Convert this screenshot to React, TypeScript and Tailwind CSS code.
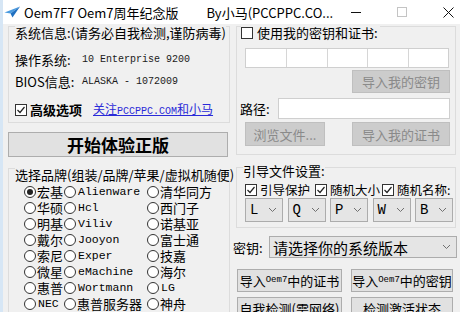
import React from 'react';

const mono = "font-['Liberation_Mono','Noto_Sans_CJK_SC',monospace]";

const Check = ({ checked = false }: { checked?: boolean }) => (
    <span className="w-[12px] h-[12px] shrink-0 border border-[#333] bg-white flex items-center justify-center">
        {checked && (
            <svg width="10" height="10" viewBox="0 0 10 10">
                <path d="M1.5 5 L4 7.5 L8.5 2" fill="none" stroke="#222" strokeWidth="1.2" />
            </svg>
        )}
    </span>
);

const Radio = ({ checked = false }: { checked?: boolean }) => (
    <span className="w-[12px] h-[12px] shrink-0 rounded-full border border-[#333] bg-white flex items-center justify-center">
        {checked && <span className="w-[6px] h-[6px] rounded-full bg-[#222]" />}
    </span>
);

const Chevron = () => (
    <svg width="9" height="6" viewBox="0 0 9 6" className="shrink-0">
        <path d="M1 1 L4.5 4.5 L8 1" fill="none" stroke="#707070" strokeWidth="1" />
    </svg>
);

const brands: [string, boolean][][] = [
    [['宏基', false], ['Alienware', true], ['清华同方', false]],
    [['华硕', false], ['Hcl', true], ['西门子', false]],
    [['明基', false], ['Viliv', true], ['诺基亚', false]],
    [['戴尔', false], ['Jooyon', true], ['富士通', false]],
    [['索尼', false], ['Exper', true], ['技嘉', false]],
    [['微星', false], ['eMachine', true], ['海尔', false]],
    [['惠普', false], ['Wortmann', true], ['LG', true]],
    [['NEC', true], ['惠普服务器', false], ['神舟', false]],
    [['苹果', false], ['VMware', true], ['三星', false]],
];

const BrandLabel = ({ text, latin }: { text: string; latin: boolean }) =>
    latin ? (
        <span className={`${mono} text-[11.5px] leading-[16px] ml-[2px]`}>{text}</span>
    ) : (
        <span className="text-[13px] leading-[16px] ml-[1px]">{text}</span>
    );

export default function App() {
    return (
        <div className="w-[460px] h-[312px] overflow-hidden bg-[#f0f0f0] border-l-[3px] border-[#d6e6f5] text-black font-['Noto_Sans_CJK_SC','Noto_Sans',sans-serif] flex flex-col">
            {/* title bar */}
            <div className="h-[24px] shrink-0 bg-white flex items-center whitespace-nowrap">
                <svg width="16" height="12" viewBox="0 0 16 12" className="ml-[1px] shrink-0">
                    <path d="M16 0.5 L0.5 6.5 L6.5 7.5 Z" fill="#4a9be0" />
                    <path d="M6.5 7.5 L8.5 11.5 L16 0.5 Z" fill="#1f6fc0" />
                </svg>
                <span className="ml-[4px] text-[13px] leading-none shrink-0">Oem7F7 Oem7周年纪念版</span>
                <span className="ml-[28px] text-[13px] leading-none shrink-0">By小马(PCCPPC.CO...</span>
                <div className="ml-auto flex h-full shrink-0">
                    <div className="w-[46px] flex items-center justify-center">
                        <svg width="10" height="10" viewBox="0 0 10 10">
                            <path d="M0 5.5 H10" stroke="#111" strokeWidth="1" />
                        </svg>
                    </div>
                    <div className="w-[46px] flex items-center justify-center">
                        <svg width="10" height="10" viewBox="0 0 10 10">
                            <rect x="0.5" y="0.5" width="9" height="9" fill="none" stroke="#c4c4c4" strokeWidth="1" />
                        </svg>
                    </div>
                    <div className="w-[46px] flex items-center justify-center">
                        <svg width="11" height="11" viewBox="0 0 11 11">
                            <path d="M0.5 0.5 L10.5 10.5 M10.5 0.5 L0.5 10.5" stroke="#111" strokeWidth="1" />
                        </svg>
                    </div>
                </div>
            </div>

            <div className="flex pt-[2px] grow min-h-0">
                {/* left column */}
                <div className="ml-[5px] w-[222px] flex flex-col">
                    <div className="h-[97px] shrink-0 border border-[#dcdcdc] px-[6px] flex flex-col">
                        <div className="-mt-[2px] h-[16px] leading-[16px] text-[13px] bg-[#f0f0f0] w-fit whitespace-nowrap">
                            系统信息:(请务必自我检测,谨防病毒)
                        </div>
                        <div className="mt-[10px] h-[18px] flex items-center leading-[18px]">
                            <span className="w-[67px] text-[13px]">操作系统:</span>
                            <span className={`${mono} text-[10px] text-[#1a1a1a]`}>10 Enterprise 9200</span>
                        </div>
                        <div className="mt-[4px] h-[18px] flex items-center leading-[18px]">
                            <span className="w-[67px] text-[13px]">BIOS信息:</span>
                            <span className={`${mono} text-[10px] text-[#1a1a1a]`}>ALASKA - 1072009</span>
                        </div>
                        <div className="mt-[10px] h-[18px] flex items-center leading-[18px]">
                            <Check checked />
                            <span className="ml-[3px] w-[63px] text-[13px] font-bold">高级选项</span>
                            <span className="text-[12px] text-[#2a2ad8] underline whitespace-nowrap">
                                关注<span className={`${mono} text-[10px]`}>PCCPPC.COM</span>和小马
                            </span>
                        </div>
                    </div>

                    <div className="mt-[9px] h-[25px] shrink-0 w-[220px] bg-[#e1e1e1] border border-[#adadad] flex items-center justify-center text-[17px] leading-none font-bold">
                        开始体验正版
                    </div>

                    <div className="mt-[11px] grow border border-b-0 border-[#dcdcdc] flex flex-col">
                        <div className="-mt-[2px] ml-[6px] h-[15px] leading-[15px] text-[13px] bg-[#f0f0f0] w-fit whitespace-nowrap">
                            选择品牌(组装/品牌/苹果/虚拟机随便)
                        </div>
                        <div className="pl-[15px] pt-[2px] flex flex-col">
                            {brands.map((row, i) => (
                                <div key={i} className="h-[16px] shrink-0 grid grid-cols-[40px_83px_1fr] items-center leading-[16px]">
                                    {row.map(([t, latin], j) => (
                                        <div key={j} className="h-[16px] flex items-center whitespace-nowrap">
                                            <Radio checked={i === 0 && j === 0} />
                                            <BrandLabel text={t} latin={latin} />
                                        </div>
                                    ))}
                                </div>
                            ))}
                        </div>
                    </div>
                </div>

                {/* right column */}
                <div className="ml-[3px] w-[224px] flex flex-col">
                    <div className="ml-[3px] w-[220px] h-[129px] shrink-0 border border-[#dcdcdc] flex flex-col">
                        <div className="-mt-[2px] ml-[4px] h-[16px] flex items-center gap-[4px] bg-[#f0f0f0] w-fit pr-[2px]">
                            <Check />
                            <span className="text-[13px] leading-[16px]">使用我的密钥和证书:</span>
                        </div>
                        <div className="mt-[7px] ml-[8px] w-[204px] h-[20px] grid grid-cols-5 border border-[#cfcfcf] bg-white">
                            <div />
                            <div className="border-l border-[#d6d6d6]" />
                            <div className="border-l border-[#d6d6d6]" />
                            <div className="border-l border-[#d6d6d6]" />
                            <div className="border-l border-[#d6d6d6]" />
                        </div>
                        <div className="mt-[2px] self-end mr-[5px] w-[98px] h-[23px] bg-[#cccccc] border border-[#bfbfbf] text-[#8a8a8a] text-[13px] leading-none flex items-center justify-center">
                            导入我的密钥
                        </div>
                        <div className="mt-[5px] h-[21px] flex items-center">
                            <span className="ml-[3px] text-[13px] leading-none">路径:</span>
                            <div className="ml-auto mr-[5px] w-[172px] h-[21px] bg-white border border-[#cfcfcf]" />
                        </div>
                        <div className="mt-[3px] h-[24px] flex">
                            <div className="ml-[8px] w-[80px] bg-[#cccccc] border border-[#bfbfbf] text-[#8a8a8a] text-[13px] leading-none flex items-center justify-center">
                                浏览文件...
                            </div>
                            <div className="ml-auto mr-[5px] w-[98px] bg-[#cccccc] border border-[#bfbfbf] text-[#8a8a8a] text-[13px] leading-none flex items-center justify-center">
                                导入我的证书
                            </div>
                        </div>
                    </div>

                    <div className="mt-[12px] ml-[3px] w-[220px] h-[61px] shrink-0 border border-[#dcdcdc] flex flex-col">
                        <div className="-mt-[5px] ml-[6px] h-[16px] leading-[16px] text-[13px] bg-[#f0f0f0] w-fit">
                            引导文件设置:
                        </div>
                        <div className="mt-[3px] ml-[8px] h-[16px] flex items-center text-[12.5px] leading-[16px] whitespace-nowrap">
                            <div className="w-[70px] flex items-center gap-[3px]">
                                <Check checked />
                                <span>引导保护</span>
                            </div>
                            <div className="w-[67px] flex items-center gap-[3px]">
                                <Check checked />
                                <span>随机大小</span>
                            </div>
                            <div className="flex items-center gap-[3px]">
                                <Check checked />
                                <span>随机名称:</span>
                            </div>
                        </div>
                        <div className="ml-[8px] h-[24px] flex gap-[4.5px]">
                            {['L', 'Q', 'P', 'W', 'B'].map((l) => (
                                <div key={l} className="w-[38px] bg-[#e5e5e5] border border-[#acacac] flex items-center justify-between pl-[4px] pr-[5px]">
                                    <span className={`${mono} text-[14px] leading-none`}>{l}</span>
                                    <Chevron />
                                </div>
                            ))}
                        </div>
                    </div>

                    <div className="mt-[8px] h-[22px] shrink-0 flex items-center">
                        <span className="w-[36px] text-[13px] leading-none">密钥:</span>
                        <div className="w-[188px] h-[22px] bg-[#e5e5e5] border border-[#acacac] flex items-center justify-between pl-[3px] pr-[5px]">
                            <span className="text-[15px] leading-none">请选择你的系统版本</span>
                            <Chevron />
                        </div>
                    </div>

                    <div className="mt-[11px] h-[23px] shrink-0 flex">
                        <div className="ml-[4px] w-[105px] bg-[#e1e1e1] border border-[#adadad] text-[13px] leading-none flex items-center justify-center whitespace-nowrap">
                            导入<span className={`${mono} text-[9px]`}>Oem7</span>中的证书
                        </div>
                        <div className="ml-[9px] w-[102px] bg-[#e1e1e1] border border-[#adadad] text-[13px] leading-none flex items-center justify-center whitespace-nowrap">
                            导入<span className={`${mono} text-[9px]`}>Oem7</span>中的密钥
                        </div>
                    </div>
                    <div className="mt-[5px] h-[23px] shrink-0 flex">
                        <div className="ml-[4px] w-[105px] bg-[#e1e1e1] border border-[#adadad] text-[13px] leading-none flex items-center justify-center whitespace-nowrap">
                            自我检测(需网络)
                        </div>
                        <div className="ml-[9px] w-[102px] bg-[#e1e1e1] border border-[#adadad] text-[13px] leading-none flex items-center justify-center whitespace-nowrap">
                            检测激活状态
                        </div>
                    </div>
                </div>
            </div>
        </div>
    );
}
